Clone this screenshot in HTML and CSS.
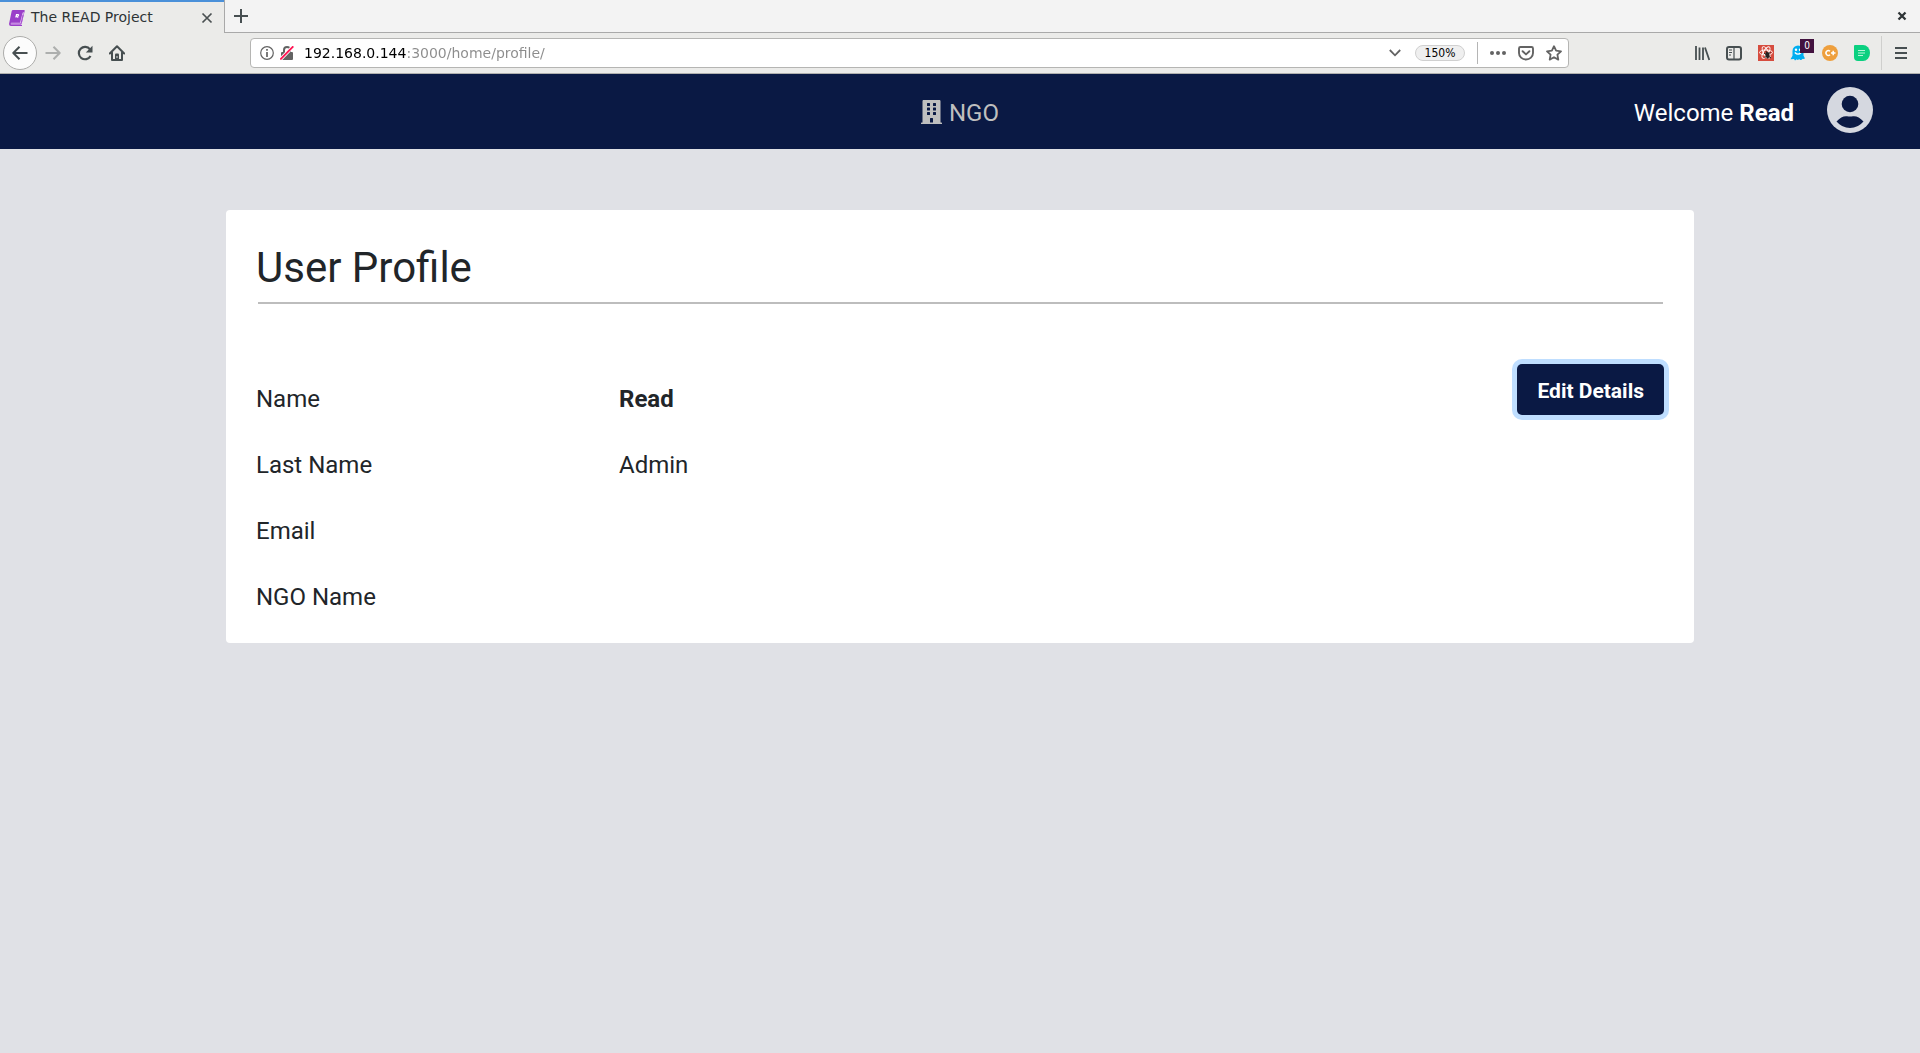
FILE: index.html
```html
<!DOCTYPE html>
<html lang="en">
<head>
<meta charset="utf-8">
<title>The READ Project</title>
<link rel="stylesheet" href="styles.css">
</head>
<body>
<div class="browser">
  <div class="tabstrip">
    <div class="tab">
      <svg class="favicon" viewBox="0 0 16 16"><path d="M4 0h11q1 0 .7 1L13 12.500q-.3.9-1 .9L12 14.500l1 .5v1H2Q0 16 0 14L2.700 1Q3 0 4 0z" fill="#9a3fc9"/><path d="M2.200 12.700H11l2.600-10 1.400-.7-2.700 12.700H2q-.6-1.300.2-2z" fill="#e5c6f2"/><path d="M2 14h10l2-9" fill="none" stroke="#a44bd0"/><path d="M6.800 7.500 7.500 4.500h1q1.400 0 1 1-.4.700-1.500.7L9.200 7.500" fill="none" stroke="#fff" stroke-width="1.200"/></svg>
      <span class="tab-title">The READ Project</span>
      <button class="plain" aria-label="Close tab"><svg width="12" height="12" viewBox="0 0 12 12"><path d="m1.500 1.500 9 9m0-9-9 9" stroke="#4a5052" stroke-width="1.700"/></svg></button>
    </div>
    <div class="strip-rest">
      <button class="plain" aria-label="New tab"><svg width="14" height="14" viewBox="0 0 14 14"><path d="M7 0v14M0 7h14" stroke="#474f51" stroke-width="2"/></svg></button>
      <button class="plain" aria-label="Close window"><svg width="10" height="10" viewBox="0 0 10 10"><path d="m1.500 1.500 7 7m0-7-7 7" stroke="#2e3436" stroke-width="2.300"/></svg></button>
    </div>
  </div>
  <div class="toolbar">
    <div class="nav-buttons">
      <button class="plain back" aria-label="Back"><svg width="16" height="16" viewBox="0 0 16 16"><path d="M15.500 8H1.500M7.500 1.700 1.300 8l6.200 6.300" fill="none" stroke="#474f51" stroke-width="2" stroke-linejoin="round"/></svg></button>
      <button class="plain" aria-label="Forward"><svg width="16" height="16" viewBox="0 0 16 16"><path d="M.5 8h14M8.500 1.700 14.700 8l-6.200 6.300" fill="none" stroke="#adafae" stroke-width="2" stroke-linejoin="round"/></svg></button>
      <button class="plain" aria-label="Reload"><svg width="16" height="16" viewBox="0 0 16 16"><path d="M13 4.300A6.200 6.200 0 1 0 13.500 11" fill="none" stroke="#474f51" stroke-width="2.200"/><path d="M15.500.8v6.700H8.800z" fill="#474f51"/></svg></button>
      <button class="plain" aria-label="Home"><svg width="16" height="16" viewBox="0 0 16 16"><path d="M.8 8.500 8 1.300l7.200 7.200M3 7.500V15h10V7.500" fill="none" stroke="#474f51" stroke-width="2" stroke-linejoin="round" stroke-linecap="round"/><path d="M6 15V9.500Q6 8.500 7 8.500h2q1 0 1 1V15z" fill="#474f51"/><path d="M8 11v2" stroke="#ddd"/></svg></button>
    </div>
    <div class="urlbar">
      <svg width="14" height="14" viewBox="0 0 14 14"><circle cx="7" cy="7" r="6.300" fill="none" stroke="#636363" stroke-width="1.200"/><path d="M7 6v5M7 3v1.700" stroke="#636363" stroke-width="1.700"/></svg>
      <svg width="14" height="14" viewBox="0 0 14 14"><path d="M4 6V4a3 3 0 0 1 6 0v2" fill="none" stroke="#636363" stroke-width="2"/><rect x="1" y="6" width="12" height="8" rx="1" fill="#636363"/><path d="M.3 13.500 13 .5" stroke="#fff" stroke-width="3.500"/><path d="M.3 13.500 13.300.3" stroke="#ff1453" stroke-width="1.800"/></svg>
      <input class="url" type="text" aria-label="Address" value="192.168.0.144:3000/home/profile/">
      <button class="plain" aria-label="Show history"><svg width="12" height="8" viewBox="0 0 12 8"><path d="m.8 1 5.200 5.300L11.200 1" fill="none" stroke="#636363" stroke-width="1.800"/></svg></button>
      <button class="zoom-level">150%</button>
      <span class="url-divider"></span>
      <div class="page-actions">
        <button class="plain" aria-label="Page actions"><svg width="16" height="16" viewBox="0 0 16 16"><g fill="#636363"><circle cx="2" cy="8" r="2"/><circle cx="8" cy="8" r="2"/><circle cx="14" cy="8" r="2"/></g></svg></button>
        <button class="plain" aria-label="Save to Pocket"><svg width="16" height="16" viewBox="0 0 16 16"><path d="M2.500 2h11Q15 2 15 3.500V8A7 6.500 0 0 1 1 8V3.500Q1 2 2.500 2z" fill="none" stroke="#636363" stroke-width="1.900"/><path d="m4.600 6.200 3.400 3.200 3.400-3.200" fill="none" stroke="#636363" stroke-width="1.900" stroke-linecap="round" stroke-linejoin="round"/></svg></button>
        <button class="plain" aria-label="Bookmark"><svg width="16" height="16" viewBox="0 0 16 16"><path d="m8 1.200 2.100 4.500 4.900.6-3.600 3.400.9 4.900L8 12.200l-4.300 2.400.9-4.900L1 6.300l4.900-.6z" fill="none" stroke="#636363" stroke-width="1.800" stroke-linejoin="round"/></svg></button>
      </div>
    </div>
    <div class="extensions">
      <button class="plain" aria-label="Library"><svg width="16" height="16" viewBox="0 0 16 16"><path d="M2 1v14M5.500 2.500V15M9 2.500V15M11 2.500 15.300 15" stroke="#474f51" stroke-width="1.800"/></svg></button>
      <button class="plain" aria-label="Sidebars"><svg width="16" height="16" viewBox="0 0 16 16"><rect x="1" y="2" width="14" height="12.500" rx="2" fill="none" stroke="#474f51" stroke-width="2"/><path d="M8 2v12M3 5h3M3 7.500h3M3 10h2" stroke="#474f51" stroke-width="1.200"/></svg></button>
      <button class="plain" aria-label="React tools"><svg width="16" height="16" viewBox="0 0 16 16"><path d="M0 0h16v16H0z" fill="#d64c3e"/><g fill="none" stroke="#fff" stroke-width=".9"><ellipse cx="8" cy="7.500" rx="6.500" ry="2.500"/><ellipse cx="8" cy="7.500" rx="6.500" ry="2.500" transform="rotate(60 8 7.500)"/><ellipse cx="8" cy="7.500" rx="6.500" ry="2.500" transform="rotate(120 8 7.500)"/></g><ellipse cx="9.500" cy="10" rx="2" ry="3" fill="#222"/><path d="m6 8 7 5M12.500 7l-6 6M8 6l2 8" stroke="#222"/></svg></button>
      <button class="plain ghost" aria-label="Tracker blocker"><svg width="16" height="16" viewBox="0 0 16 16"><path d="M2.500 6a5.500 5.500 0 0 1 11 0v4.500l1.500 3q-1.500.8-2.500.3-.8 1.700-2.200 1.200L9 14q-1 2-2.200.3L5 15.500 4 14l-3.500.3 2-3.500z" fill="#00aef0"/><circle cx="6" cy="4.700" r="1.200" fill="#fff"/><circle cx="10" cy="4.700" r="1.200" fill="#fff"/><path d="M4.800 7.500q3.200 3.400 6.400 0" fill="none" stroke="#fff" stroke-width="1.300"/></svg><span class="badge">0</span></button>
      <button class="plain" aria-label="C plus"><svg width="16" height="16" viewBox="0 0 16 16"><circle cx="8" cy="8" r="8" fill="#ee9f3d"/><path d="M8 6.200A2.400 2.400 0 1 0 8 9.800M9 8h4.500M11.200 5.700v4.600" fill="none" stroke="#fff" stroke-width="1.500"/></svg></button>
      <button class="plain" aria-label="Notes"><svg width="16" height="16" viewBox="0 0 16 16"><path d="M1 0h8a7 8 0 0 1 0 16H4Q0 16 0 12V1Q0 0 1 0z" fill="#0bd080"/><path d="M4 5.500h7M4 8h7M4 10.500h5" stroke="#b4f5da" stroke-width="1.200"/></svg></button>
    </div>
    <button class="plain menu" aria-label="Menu"><svg width="12" height="14" viewBox="0 0 12 14"><path d="M0 2h12M0 7h12M0 12h12" stroke="#474f51" stroke-width="2"/></svg></button>
  </div>
</div>

<header class="site-header">
  <a class="ngo-link" href="#">
    <svg width="21" height="24" viewBox="0 0 448 512"><path fill="#bfbfbf" d="M436 480h-20V24c0-13.300-10.700-24-24-24H56C42.700 0 32 10.700 32 24v456H12c-6.600 0-12 5.400-12 12v20h448v-20c0-6.600-5.400-12-12-12zM128 76c0-6.600 5.400-12 12-12h40c6.600 0 12 5.400 12 12v40c0 6.600-5.400 12-12 12h-40c-6.600 0-12-5.400-12-12V76zm0 96c0-6.600 5.400-12 12-12h40c6.600 0 12 5.400 12 12v40c0 6.600-5.400 12-12 12h-40c-6.600 0-12-5.400-12-12v-40zm52 148h-40c-6.600 0-12-5.400-12-12v-40c0-6.600 5.400-12 12-12h40c6.600 0 12 5.400 12 12v40c0 6.600-5.400 12-12 12zm76 160h-64v-84c0-6.600 5.400-12 12-12h40c6.600 0 12 5.400 12 12v84zm64-172c0 6.600-5.400 12-12 12h-40c-6.600 0-12-5.400-12-12v-40c0-6.600 5.400-12 12-12h40c6.600 0 12 5.400 12 12v40zm0-96c0 6.600-5.400 12-12 12h-40c-6.600 0-12-5.400-12-12v-40c0-6.600 5.400-12 12-12h40c6.600 0 12 5.400 12 12v40zm0-96c0 6.600-5.400 12-12 12h-40c-6.600 0-12-5.400-12-12V76c0-6.600 5.400-12 12-12h40c6.600 0 12 5.400 12 12v40z"/></svg>
    <span class="header-text">NGO</span>
  </a>
  <div class="account">
    <span class="header-text">Welcome <strong>Read</strong></span>
    <button class="plain avatar" aria-label="Account"><svg width="46" height="46" viewBox="0 0 46 46"><circle cx="23" cy="23" r="23" fill="#d5d8e0"/><circle cx="23" cy="17" r="8.300" fill="#0a1944"/><path d="M9.500 34.500Q15 28.500 20 29.200 23 30 26 29.200 31 28.500 36.500 34.500 31 41 23 41T9.500 34.500z" fill="#0a1944"/></svg></button>
  </div>
</header>

<main class="page">
  <section class="card">
    <h1>User Profile</h1>
    <hr>
    <div class="details">
      <dl>
        <dt>Name</dt><dd><strong>Read</strong></dd>
        <dt>Last Name</dt><dd>Admin</dd>
        <dt>Email</dt><dd></dd>
        <dt>NGO Name</dt><dd></dd>
      </dl>
      <button class="edit">Edit Details</button>
    </div>
  </section>
</main>
</body>
</html>
```
FILE: styles.css
```css
* { box-sizing: border-box; }

body {
  margin: 0;
  min-height: 100vh;
  background: #e0e1e6;
  color: #212529;
  font: 24px/36px Roboto, sans-serif;
}

svg { display: block; flex: none; }

.plain {
  display: flex;
  align-items: center;
  justify-content: center;
  padding: 0;
  border: 0;
  background: none;
}

strong { font-weight: 700; }

/* Browser window */
.browser {
  font: 14px/20px "DejaVu Sans", sans-serif;
  color: #2e3436;
  background: #ebebe9;
}

.tabstrip { display: flex; height: 33px; }

.tab {
  display: flex;
  align-items: center;
  width: 224px;
  padding: 0 11px 0 9px;
  border-top: 2px solid #4a90d9;
}

.favicon { width: 16px; height: 16px; }

.tab-title {
  flex: 1;
  margin-left: 6px;
  padding-bottom: 2px;
}

.strip-rest {
  flex: 1;
  display: flex;
  align-items: center;
  justify-content: space-between;
  padding: 0 13px 0 9px;
  background: #f3f3f3;
  border-left: 1px solid #a9a9a9;
  border-bottom: 1px solid #a9a9a9;
}

.toolbar {
  display: flex;
  align-items: center;
  height: 41px;
  padding: 0 13px 0 3px;
  border-bottom: 1px solid #b0b0ae;
}

.nav-buttons {
  display: flex;
  align-items: center;
  gap: 16px;
  width: 247px;
}

.back {
  width: 34px;
  height: 34px;
  margin-right: -8px;
  border: 1px solid #acacaa;
  border-radius: 50%;
  background: #fcfcfc;
}

.urlbar {
  flex: 1;
  display: flex;
  align-items: center;
  gap: 6px;
  height: 30px;
  padding: 0 6px 0 9px;
  border: 1px solid #b5b5b3;
  border-radius: 4px;
  background: #fff;
}

/* The host is dark, the rest of the address is grey */
.url {
  flex: 1;
  min-width: 0;
  margin-left: 4px;
  padding: 0;
  border: 0;
  color: transparent;
  background: linear-gradient(to right, #000 104px, #8c8c8c 104px);
  -webkit-background-clip: text;
  background-clip: text;
  font: 14px/20px "DejaVu Sans", sans-serif;
}

.zoom-level {
  width: 50px;
  height: 16px;
  margin: 0 6px 0 8px;
  padding: 0;
  border: 1px solid #d0d0d0;
  border-radius: 8px;
  background: #efefef;
  color: #000;
  font: 12px/14px "DejaVu Sans Condensed", "DejaVu Sans", sans-serif;
}

.url-divider {
  width: 1px;
  height: 22px;
  margin-right: 6px;
  background: #b5b5b5;
}

.page-actions { display: flex; gap: 12px; }

.extensions {
  display: flex;
  gap: 16px;
  margin: 0 11px 0 125px;
}

.ghost { position: relative; }

.badge {
  position: absolute;
  left: 10px;
  top: -6px;
  width: 14px;
  height: 14px;
  background: #42123f;
  color: #fff;
  font: 10px/13px "DejaVu Sans Condensed", sans-serif;
  text-align: center;
}

.menu {
  height: 34px;
  padding-left: 13px;
  border-left: 1px solid #cfcfcd;
}

/* Site header */
.site-header {
  display: grid;
  grid-template-columns: 1fr auto 1fr;
  align-items: center;
  height: 75px;
  padding: 0 47px;
  background: #0a1944;
  color: #fff;
}

.header-text { padding-top: 2px; }

.ngo-link {
  grid-column: 2;
  display: flex;
  align-items: center;
  gap: 7px;
  color: #bfbfbf;
  text-decoration: none;
}

.account {
  display: flex;
  align-items: center;
  justify-content: flex-end;
  gap: 33px;
}

.avatar { margin-bottom: 4px; }

/* Profile */
.page {
  max-width: 1468px;
  margin: 61px auto 0;
}

.card {
  padding: 31px 30px 20px;
  border-radius: 4px;
  background: #fff;
}

h1 {
  margin: 0;
  font-size: 42px;
  line-height: 54px;
  font-weight: 400;
}

hr {
  height: 2px;
  margin: 7px 1px 60px 2px;
  border: 0;
  background: #bdbdbd;
}

.details {
  display: flex;
  align-items: flex-start;
  justify-content: space-between;
}

dl {
  display: grid;
  grid-template-columns: 363px 1fr;
  row-gap: 30px;
  margin: 0;
  padding: 17px 0 8px;
}

dt, dd {
  min-height: 36px;
  margin: 0;
}

.edit {
  height: 51px;
  padding: 2px 20px 0;
  border: 0;
  border-radius: 5px;
  background: #0a1944;
  color: #fff;
  font: 700 21px/30px Roboto, sans-serif;
  box-shadow: 0 0 0 5px #bfdeff;
}
```
